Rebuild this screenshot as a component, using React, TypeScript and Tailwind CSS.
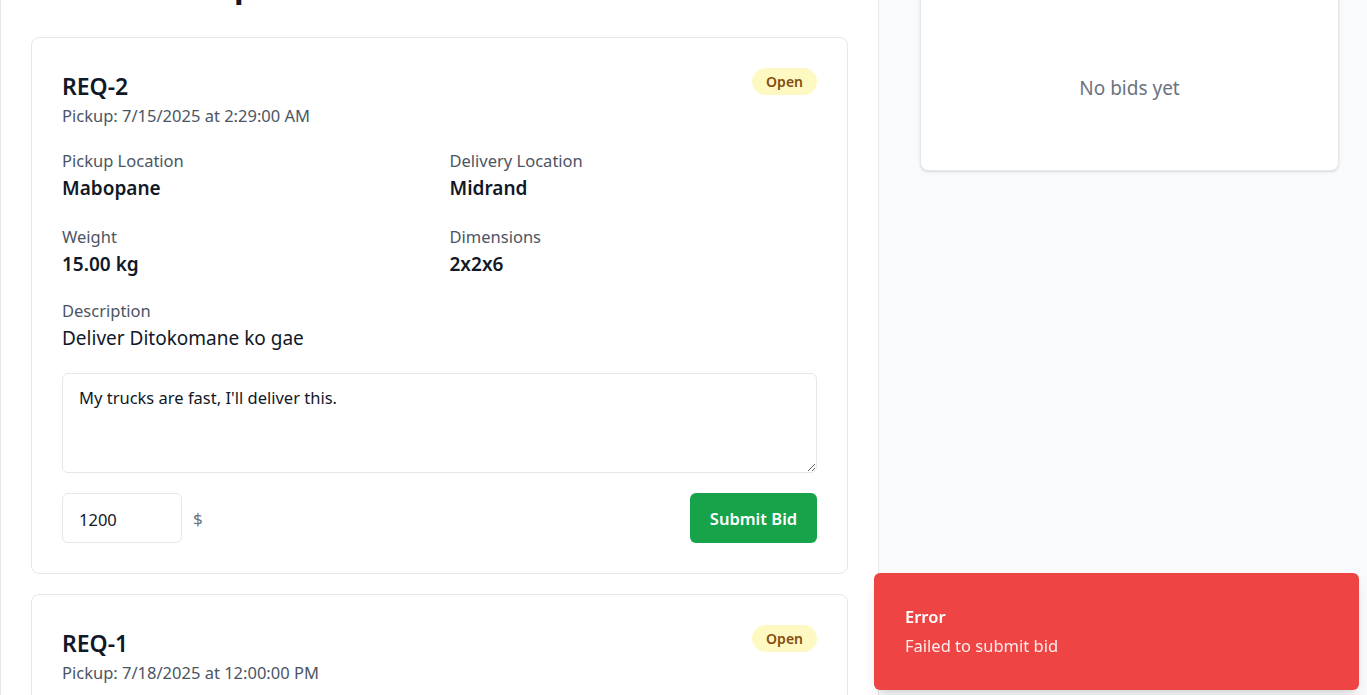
import React from "react";

type Req = {
  id: string;
  pickup: string;
  from: string;
  to: string;
  weight: string;
  dims: string;
  desc: string;
  note: string;
  amount: string;
};

const requests: Req[] = [
  {
    id: "REQ-2",
    pickup: "Pickup: 7/15/2025 at 2:29:00 AM",
    from: "Mabopane",
    to: "Midrand",
    weight: "15.00 kg",
    dims: "2x2x6",
    desc: "Deliver Ditokomane ko gae",
    note: "My trucks are fast, I'll deliver this.",
    amount: "1200",
  },
  {
    id: "REQ-1",
    pickup: "Pickup: 7/18/2025 at 12:00:00 PM",
    from: "Pretoria",
    to: "Johannesburg",
    weight: "20.00 kg",
    dims: "3x3x3",
    desc: "Deliver boxes",
    note: "",
    amount: "",
  },
];

function Field({ label, value, bold = true }: { label: string; value: string; bold?: boolean }) {
  return (
    <div>
      <div className="text-[16.5px] leading-[24px] text-[#4b5563]">{label}</div>
      <div
        className={
          bold
            ? "text-[19px] leading-[30px] font-semibold text-[#111827]"
            : "text-[19px] leading-[30px] text-[#111827]"
        }
      >
        {value}
      </div>
    </div>
  );
}

function RequestCard({ r }: { r: Req }) {
  return (
    <div className="rounded-lg border border-[#e5e7eb] bg-white p-[30px]">
      <div className="flex items-start justify-between">
        <div>
          <h3 className="text-[23px] leading-[36px] font-semibold text-[#111827]">{r.id}</h3>
          <p className="text-[16.5px] leading-[24px] text-[#4b5563]">{r.pickup}</p>
        </div>
        <span className="rounded-full bg-[#fef9c3] px-[14px] py-1 text-[14px] leading-[19px] font-semibold text-[#854d0e]">
          Open
        </span>
      </div>

      <div className="mt-[21px] grid grid-cols-2 gap-x-5 gap-y-[22px]">
        <Field label="Pickup Location" value={r.from} />
        <Field label="Delivery Location" value={r.to} />
        <Field label="Weight" value={r.weight} />
        <Field label="Dimensions" value={r.dims} />
      </div>

      <div className="mt-5">
        <Field label="Description" value={r.desc} bold={false} />
      </div>

      <textarea
        className="mt-5 block h-[100px] w-full rounded-md border border-[#e5e7eb] px-4 py-3 text-[16.5px] leading-[24px] text-[#111827] outline-none"
        placeholder="Add a note to your bid..."
        defaultValue={r.note}
      />

      <div className="mt-5 flex items-center justify-between">
        <div className="flex items-center">
          <input
            type="text"
            defaultValue={r.amount}
            placeholder="Amount"
            className="h-[50px] w-[120px] rounded-md border border-[#e5e7eb] px-4 pt-[2px] text-[16.5px] text-[#111827] outline-none"
          />
          <span className="ml-[11px] pt-[2px] text-[17px] text-[#6b7280]">$</span>
        </div>
        <button className="h-[50px] w-[127px] rounded-md bg-[#16a34a] pt-[2px] text-[16.5px] font-semibold text-white">
          Submit Bid
        </button>
      </div>
    </div>
  );
}

export default function App() {
  return (
    <div className="min-h-screen bg-[#f9fafb] font-['Noto_Sans',sans-serif]">
      <div className="-mt-[31px] grid min-h-[calc(100vh+31px)] grid-cols-[879px_1fr]">
        <div className="border-x border-[#e5e7eb] bg-white px-[30px] pb-10">
          <h1 className="mb-9 text-[32px] leading-[32px] font-bold text-[#111827]">Available Shipments</h1>
          <div className="flex flex-col gap-5">
            {requests.map((r) => (
              <RequestCard key={r.id} r={r} />
            ))}
          </div>
        </div>

        <div className="bg-[#f9fafb] pl-[41px] pr-7">
          <div className="rounded-lg border border-[#e5e7eb] bg-white px-6 pt-6 pb-6 shadow-sm">
            <div className="pt-[80px] pb-[44px] text-center text-[19px] leading-[28px] text-[#6b7280]">
              No bids yet
            </div>
          </div>
        </div>
      </div>

      <div className="fixed right-[8px] bottom-[5px] h-[117px] w-[485px] rounded-md bg-[#ef4444] pt-8 pl-[31px] text-white shadow-lg">
        <div className="text-[16.5px] leading-[24px] font-semibold">Error</div>
        <div className="mt-[5px] text-[16.5px] leading-[24px] opacity-90">Failed to submit bid</div>
      </div>
    </div>
  );
}
